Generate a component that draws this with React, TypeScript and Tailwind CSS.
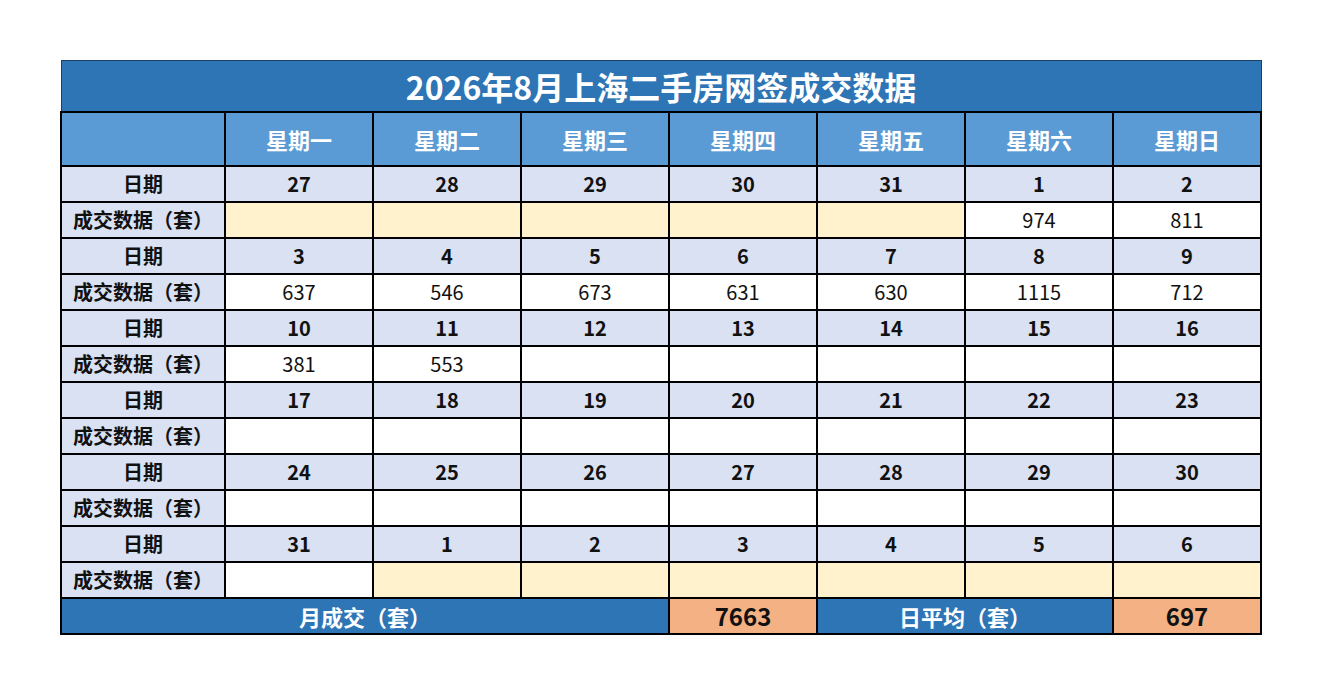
import React from "react";

const days = ["星期一", "星期二", "星期三", "星期四", "星期五", "星期六", "星期日"];

type Cell = { v: string; tone: "white" | "yellow" };

const weeks: { dates: string[]; data: Cell[] }[] = [
  {
    dates: ["27", "28", "29", "30", "31", "1", "2"],
    data: [
      { v: "", tone: "yellow" },
      { v: "", tone: "yellow" },
      { v: "", tone: "yellow" },
      { v: "", tone: "yellow" },
      { v: "", tone: "yellow" },
      { v: "974", tone: "white" },
      { v: "811", tone: "white" },
    ],
  },
  {
    dates: ["3", "4", "5", "6", "7", "8", "9"],
    data: ["637", "546", "673", "631", "630", "1115", "712"].map((v) => ({ v, tone: "white" as const })),
  },
  {
    dates: ["10", "11", "12", "13", "14", "15", "16"],
    data: ["381", "553", "", "", "", "", ""].map((v) => ({ v, tone: "white" as const })),
  },
  {
    dates: ["17", "18", "19", "20", "21", "22", "23"],
    data: Array.from({ length: 7 }, () => ({ v: "", tone: "white" as const })),
  },
  {
    dates: ["24", "25", "26", "27", "28", "29", "30"],
    data: Array.from({ length: 7 }, () => ({ v: "", tone: "white" as const })),
  },
  {
    dates: ["31", "1", "2", "3", "4", "5", "6"],
    data: [
      { v: "", tone: "white" },
      { v: "", tone: "yellow" },
      { v: "", tone: "yellow" },
      { v: "", tone: "yellow" },
      { v: "", tone: "yellow" },
      { v: "", tone: "yellow" },
      { v: "", tone: "yellow" },
    ],
  },
];

const cell = "border-2 border-black text-center align-middle p-0 leading-none";

export default function App() {
  return (
    <div
      className="w-[1320px] h-[694px] bg-white pt-[60px] pl-[60px] text-[#111]"
      style={{ fontFamily: '"Noto Sans CJK SC", "Noto Sans", sans-serif' }}
    >
      <table className="border-collapse table-fixed w-[1200px]">
        <colgroup>
          <col className="w-[164px]" />
          {days.map((d) => (
            <col key={d} className="w-[148px]" />
          ))}
        </colgroup>
        <tbody>
          <tr className="h-[51px]">
            <td
              colSpan={8}
              className="border border-[#1f3f66] bg-[#2e75b6] text-white text-center text-[32px] font-bold leading-none"
            >
              2026年8月上海二手房网签成交数据
            </td>
          </tr>
          <tr className="h-[54px]">
            <td className={`${cell} bg-[#5b9bd5]`} />
            {days.map((d) => (
              <td key={d} className={`${cell} bg-[#5b9bd5] text-white text-[22px] font-bold`}>
                {d}
              </td>
            ))}
          </tr>
          {weeks.map((w, i) => (
            <React.Fragment key={i}>
              <tr className="h-[36px]">
                <td className={`${cell} bg-[#d9e1f2] text-[20px] font-bold`}>日期</td>
                {w.dates.map((d, j) => (
                  <td key={j} className={`${cell} bg-[#d9e1f2] text-[20px] font-bold`}>
                    {d}
                  </td>
                ))}
              </tr>
              <tr className="h-[36px]">
                <td className={`${cell} bg-[#d9e1f2] text-[20px] font-bold`}>成交数据（套）</td>
                {w.data.map((c, j) => (
                  <td
                    key={j}
                    className={`${cell} text-[20px] ${c.tone === "yellow" ? "bg-[#fff2cc]" : "bg-white"}`}
                  >
                    {c.v}
                  </td>
                ))}
              </tr>
            </React.Fragment>
          ))}
          <tr className="h-[36px]">
            <td colSpan={4} className={`${cell} bg-[#2e75b6] text-white text-[22px] font-bold`}>
              月成交（套）
            </td>
            <td className={`${cell} bg-[#f4b183] text-[24px] font-bold`}>7663</td>
            <td colSpan={2} className={`${cell} bg-[#2e75b6] text-white text-[22px] font-bold`}>
              日平均（套）
            </td>
            <td className={`${cell} bg-[#f4b183] text-[24px] font-bold`}>697</td>
          </tr>
        </tbody>
      </table>
    </div>
  );
}
